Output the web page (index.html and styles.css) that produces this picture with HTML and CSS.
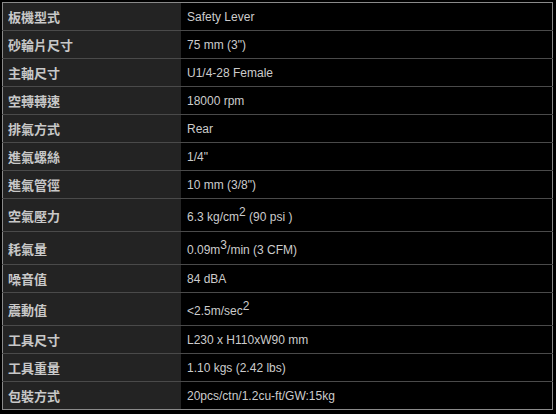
FILE: index.html
```html
<!DOCTYPE html>
<html lang="zh-Hant">
<head>
<meta charset="utf-8">
<link rel="stylesheet" href="styles.css">
</head>
<body>
<div class="wrap">
<table class="spec">
<tr><th>板機型式</th><td>Safety Lever</td></tr>
<tr><th>砂輪片尺寸</th><td>75 mm (3")</td></tr>
<tr><th>主軸尺寸</th><td>U1/4-28 Female</td></tr>
<tr><th>空轉轉速</th><td>18000 rpm</td></tr>
<tr><th>排氣方式</th><td>Rear</td></tr>
<tr><th>進氣螺絲</th><td>1/4"</td></tr>
<tr><th>進氣管徑</th><td>10 mm (3/8")</td></tr>
<tr class="tall"><th>空氣壓力</th><td>6.3 kg/cm<sup>2</sup> (90 psi )</td></tr>
<tr class="tall"><th>耗氣量</th><td>0.09m<sup>3</sup>/min (3 CFM)</td></tr>
<tr><th>噪音值</th><td>84 dBA</td></tr>
<tr class="tall"><th>震動值</th><td>&lt;2.5m/sec<sup>2</sup></td></tr>
<tr><th>工具尺寸</th><td>L230 x H110xW90 mm</td></tr>
<tr><th>工具重量</th><td>1.10 kgs (2.42 lbs)</td></tr>
<tr><th>包裝方式</th><td>20pcs/ctn/1.2cu-ft/GW:15kg</td></tr>
</table>
</div>
</body>
</html>
```
FILE: styles.css
```css
html, body {
  margin: 0;
  padding: 0;
  background: #000;
}
.wrap {
  padding: 2px;
}
.spec {
  width: 551px;
  border-collapse: collapse;
  border: 1px solid #8a8a8a;
  table-layout: fixed;
}
.spec th, .spec td {
  height: 27px;
  padding: 0;
  vertical-align: middle;
  border-bottom: 1px solid #4a4a4a;
  text-align: left;
}
.spec tr:last-child th, .spec tr:last-child td {
  border-bottom: 1px solid #8a8a8a;
}
.spec tr.tall th, .spec tr.tall td {
  height: 32px;
}
.spec th {
  width: 173px;
  padding-left: 5px;
  background: #232323;
  color: #c8c8c8;
  font: bold 13px "Noto Sans CJK TC", "Noto Sans", sans-serif;
}
.spec td {
  padding-left: 6px;
  background: #000;
  color: #cccccc;
  font: 12px "Liberation Sans", Arial, sans-serif;
}
.spec sup {
  font-size: 12px;
  vertical-align: 5px;
  line-height: 1;
}
```
